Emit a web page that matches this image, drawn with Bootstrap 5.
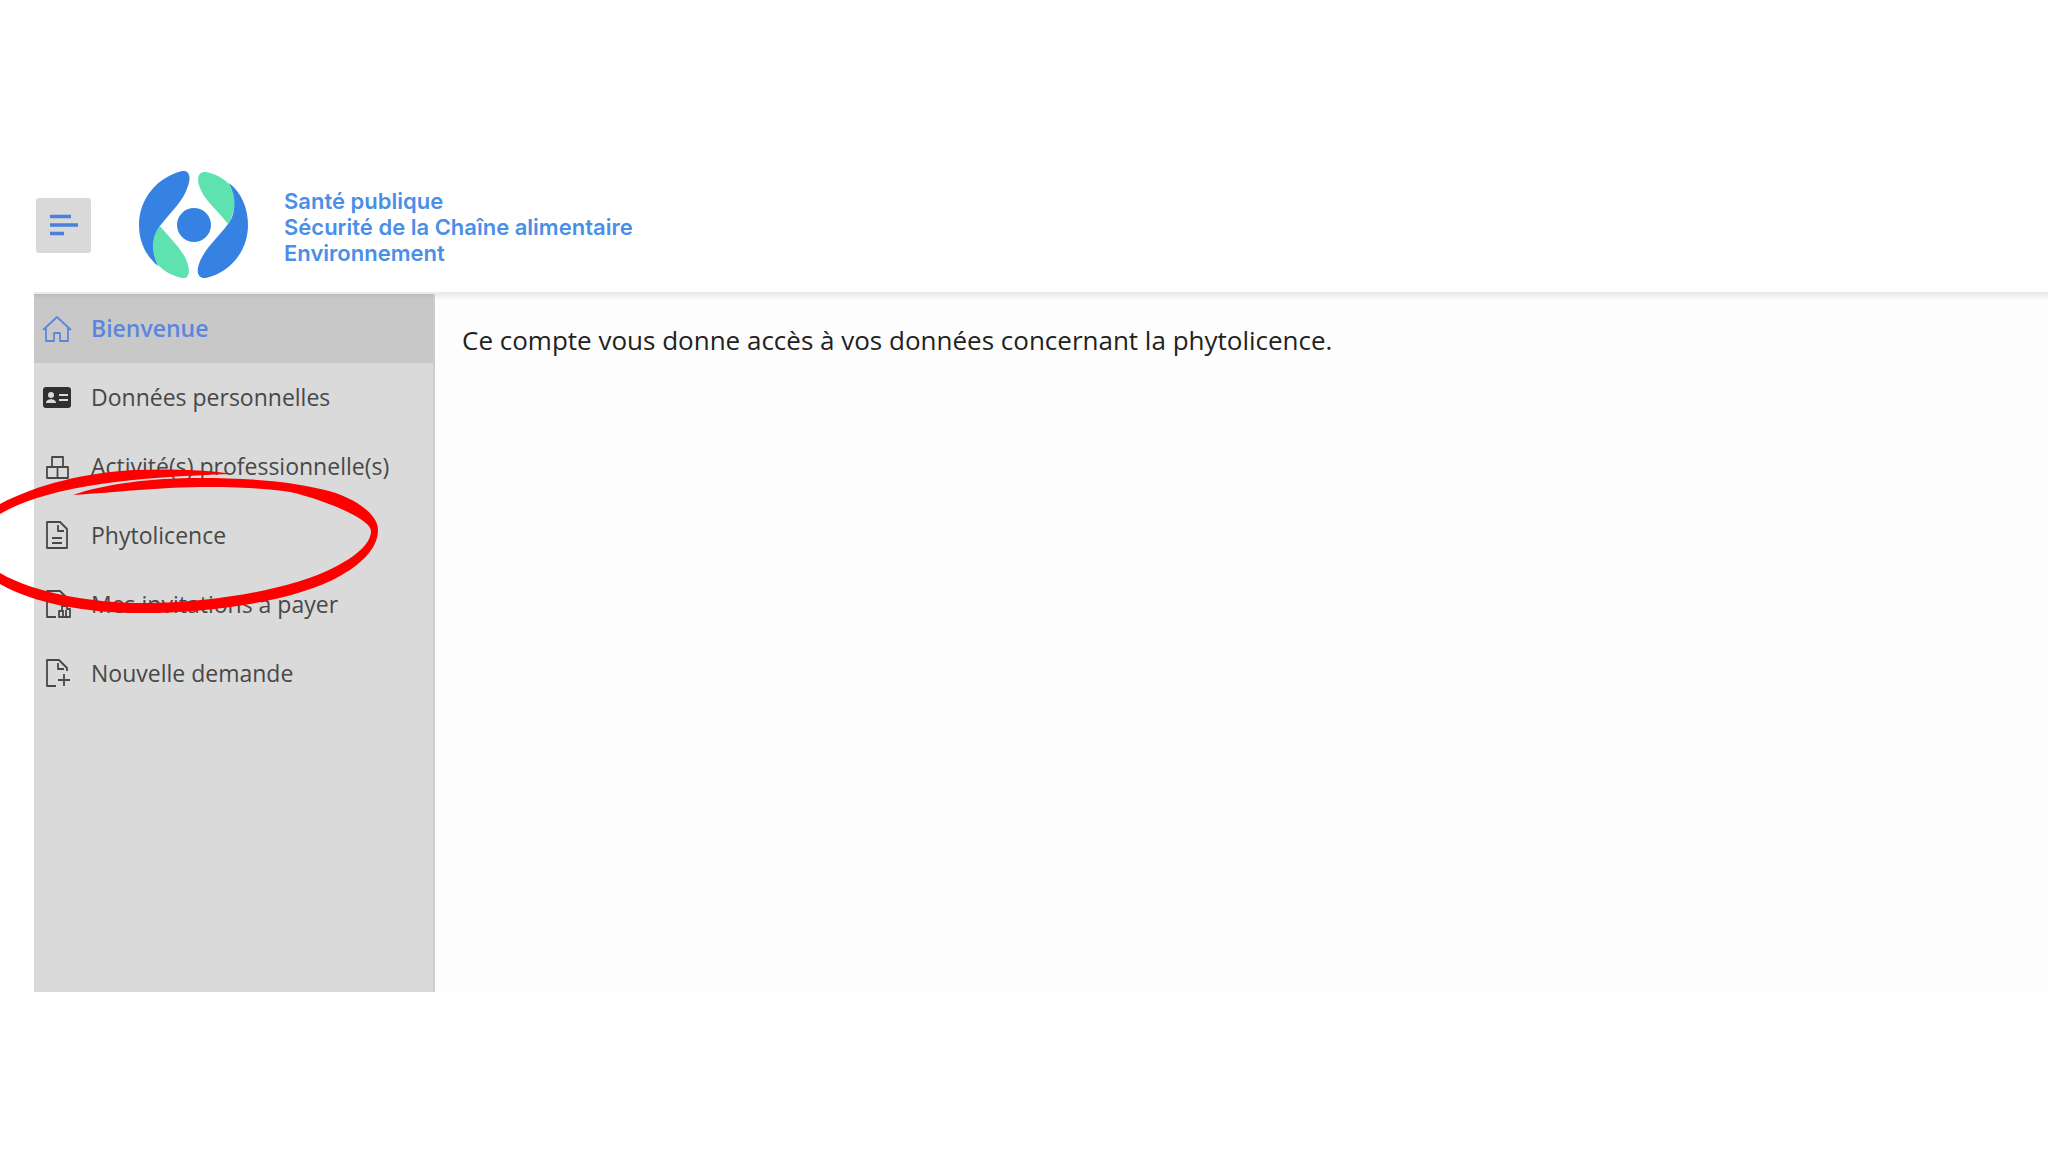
<!DOCTYPE html>
<html lang="fr">
<head>
<meta charset="utf-8">
<meta name="viewport" content="width=device-width, initial-scale=1">
<title>Phytolicence</title>
<link href="https://cdn.jsdelivr.net/npm/bootstrap@5.3.0/dist/css/bootstrap.min.css" rel="stylesheet">
<style>
body { background: #fff; color: #222; font-family: "Open Sans", "Noto Sans", sans-serif; overflow-x: hidden; }
.portal { padding: 158px 0 160px 34px; }
.topbar { height: 134px; padding-left: 2px; }
.menu-toggle { width: 55px; height: 55px; background: #d9d9d9; border: 0; border-radius: 3px; }
.brand { margin-left: 48px; gap: 35px; color: #4a8fe7; font: 600 22px/26px Inter, sans-serif; }
.brand:hover { color: #3682e3; }
.brand-text { padding-top: 4px; }
.workspace { background: #fdfdfd; border-top: 2px solid #ebebeb; box-shadow: inset 0 6px 5px -4px #e6e6e6; }
.sidebar { width: 401px; background: #dadada; border-right: 2px solid #cbcbcb; }
.side-link { height: 69px; padding: 0 8px; gap: 19px; font-size: 23px; color: #484848; }
.side-link:hover { background: #d0d0d0; color: #333; }
.side-link.active { background: #c8c8c8; color: #5c86dc; font-weight: 600; box-shadow: inset 0 5px 5px -4px #b5b5b5; }
.side-link svg { width: 30px; height: 30px; flex: none; fill: none; stroke: currentColor; stroke-width: 1.8; stroke-linejoin: round; }
.intro { padding: 26px 27px; font-size: 26px; line-height: 40px; }
.ring { left: -64px; top: 166px; z-index: 2; pointer-events: none; }
</style>
</head>
<body>
<div class="portal min-vh-100 d-flex flex-column">
  <header class="topbar d-flex align-items-center">
    <button class="menu-toggle p-0 d-flex align-items-center justify-content-center" type="button" aria-label="Menu">
      <svg width="28" height="24" fill="none" stroke="#4a7fdc" stroke-width="3.500"><path d="M0 3.500H21M0 12H28M0 20.500H14"/></svg>
    </button>
    <a class="brand d-flex align-items-center text-decoration-none" href="#">
      <svg width="110" height="108" viewBox="0 0 110 108" aria-hidden="true">
        <path fill="#3682e3" d="M43 0C51-1 52 7 49 15C44 31 32 40 21 55C11 68 15 84 19 95C7 85 0 71 0 54C0 27 19 6 43 0Z"/>
        <path fill="#5ee3b0" d="M21 55C13 65 11 80 19 94C26 101 34 105 43 107C50 108 51 101 49 94C45 79 32 69 21 55Z"/>
        <path fill="#3682e3" d="M67 107C59 108 57 101 60 93C65 78 78 68 89 53C99 40 95 24 90 12C103 22 109 38 109 54C109 81 90 102 67 107Z"/>
        <path fill="#5ee3b0" d="M89 53C97 42 98 25 90 13C83 6 76 3 67 1C59 0 58 7 60 14C64 29 78 38 89 53Z"/>
        <circle cx="55" cy="54" r="17" fill="#3682e3"/>
      </svg>
      <span class="brand-text">Santé publique<br>Sécurité de la Chaîne alimentaire<br>Environnement</span>
    </a>
  </header>
  <div class="workspace d-flex flex-grow-1 position-relative">
    <nav class="sidebar flex-shrink-0" aria-label="Menu principal">
      <a class="side-link active d-flex align-items-center text-decoration-none" href="#" aria-current="page">
        <svg viewBox="0 0 30 30"><path d="M1 16 15 3 29 16M4 14V27H12V19H18V27H26V14"/></svg>Bienvenue</a>
      <a class="side-link d-flex align-items-center text-decoration-none" href="#">
        <svg viewBox="0 0 30 30"><rect x="1" y="4" width="28" height="21" rx="3" fill="#303030" stroke="none"/><g fill="#dadada" stroke="none"><circle cx="9" cy="12" r="3"/><path d="M4 20C4 15 14 15 14 20ZM17 11H26V13H17ZM17 16H26V18H17Z"/></g></svg>Données personnelles</a>
      <a class="side-link d-flex align-items-center text-decoration-none" href="#">
        <svg viewBox="0 0 30 30"><path d="M5 15H26V26H5ZM10 15V5H21V15M15.500 15V26"/></svg>Activité(s) professionnelle(s)</a>
      <a class="side-link d-flex align-items-center text-decoration-none" href="#">
        <svg viewBox="0 0 30 30"><path d="M5 1H18L25 8V27H5ZM16 4V10H22M10 17H20M10 22H20"/></svg>Phytolicence</a>
      <a class="side-link d-flex align-items-center text-decoration-none" href="#">
        <svg viewBox="0 0 30 30"><path d="M14 27H5V1H18L25 8V14M16 4V10H22M17 27V21H20V16H25V19H28V27ZM21 20V27M24 20V27"/></svg>Mes invitations à payer</a>
      <a class="side-link d-flex align-items-center text-decoration-none" href="#">
        <svg viewBox="0 0 30 30"><path d="M14 27H5V1H17L25 9V12M16 4V10H22M22 15V27M16 21H28"/></svg>Nouvelle demande</a>
    </nav>
    <main class="intro flex-grow-1"><p class="m-0">Ce compte vous donne accès à vos données concernant la phytolicence.</p></main>
    <!-- hand-drawn ring around the Phytolicence entry -->
    <svg class="ring position-absolute" width="420" height="160" viewBox="-30 460 420 160" aria-hidden="true">
      <path fill="red" d="M232 474C200 469 165 469 133 470C85 473 38 484 0 504C-38 525-36 563 0 584C33 603 85 613 140 613C220 613 300 599 340 576C365 562 378 546 378 530C378 512 350 496 325 490C290 481 245 478 200 478C150 478 105 484 73 495C120 492 150 488 200 487C235 487 262 488 290 492C325 500 371 519 371 531C371 544 355 557 333 568C295 588 215 603 145 603C90 603 35 593 0 573C-30 555-29 531 0 514C45 487 130 477 232 474Z"/>
    </svg>
  </div>
</div>
<script src="https://cdn.jsdelivr.net/npm/bootstrap@5.3.0/dist/js/bootstrap.bundle.min.js"></script>
</body>
</html>
